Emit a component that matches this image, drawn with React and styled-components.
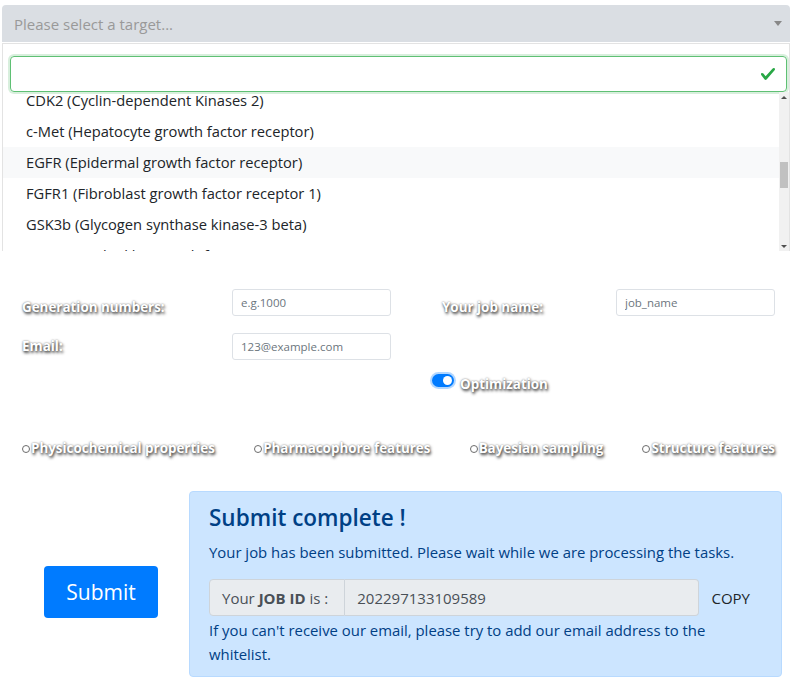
import React from 'react';
import styled, { createGlobalStyle } from 'styled-components';

const FONT = `"Open Sans", "Noto Sans", "Liberation Sans", sans-serif`;

const GlobalStyle = createGlobalStyle`
	body {
		margin: 0;
		background: #fff;
		font-family: ${FONT};
	}
	* {
		box-sizing: border-box;
	}
`;

const targets = [
	'CDK2 (Cyclin-dependent Kinases 2)',
	'c-Met (Hepatocyte growth factor receptor)',
	'EGFR (Epidermal growth factor receptor)',
	'FGFR1 (Fibroblast growth factor receptor 1)',
	'GSK3b (Glycogen synthase kinase-3 beta)',
	'IGF1R (Insulin-like growth factor 1 receptor)',
];

const features = [
	'Physicochemical properties',
	'Pharmacophore features',
	'Bayesian sampling',
	'Structure features',
];

function CheckIcon() {
	return (
		<svg width='16' height='16' viewBox='0 0 8 8'>
			<path
				fill='#28a745'
				d='M2.3 6.73L.6 4.53c-.4-1.04.46-1.4 1.1-.8l1.1 1.4 3.4-3.8c.6-.63 1.6-.27 1.2.7l-4 4.6c-.43.5-.8.4-1.1.1z'
			/>
		</svg>
	);
}

function App() {
	return (
		<Page>
			<GlobalStyle />
			<SelectBox>
				Please select a target...
				<Caret />
			</SelectBox>
			<Dropdown>
				<SearchWrap>
					<SearchInput>
						<CheckIcon />
					</SearchInput>
				</SearchWrap>
				<ListViewport>
					<Options>
						<OptionList>
							{targets.map((t) => (
								<Option key={t} $active={t.startsWith('EGFR')}>
									{t}
								</Option>
							))}
						</OptionList>
					</Options>
					<Scrollbar>
						<ScrollArrow $up />
						<Track>
							<Thumb />
						</Track>
						<ScrollArrow />
					</Scrollbar>
				</ListViewport>
			</Dropdown>

			<Form>
				<FieldGrid>
					<Label $align='end'>Generation numbers:</Label>
					<TextInput placeholder='e.g.1000' />
					<Label $align='end' $indent>
						Your job name:
					</Label>
					<TextInput placeholder='job_name' />
					<Label $align='center'>Email:</Label>
					<TextInput placeholder='123@example.com' />
				</FieldGrid>
				<SwitchRow>
					<Switch />
					<Label $drop>Optimization</Label>
				</SwitchRow>
				<RadioRow>
					{features.map((f) => (
						<RadioItem key={f}>
							<RadioDot />
							<Label>{f}</Label>
						</RadioItem>
					))}
				</RadioRow>
			</Form>

			<Bottom>
				<SubmitCol>
					<SubmitBtn>Submit</SubmitBtn>
				</SubmitCol>
				<Alert>
					<AlertTitle>Submit complete !</AlertTitle>
					<AlertText>
						Your job has been submitted. Please wait while we are processing
						the tasks.
					</AlertText>
					<InputGroup>
						<Prepend>
							Your&nbsp;<b>JOB ID</b>&nbsp;is :
						</Prepend>
						<JobInput readOnly value='202297133109589' />
						<CopyBtn>COPY</CopyBtn>
					</InputGroup>
					<Note>
						If you can't receive our email, please try to add our email address
						to the whitelist.
					</Note>
				</Alert>
			</Bottom>
		</Page>
	);
}

export default App;

const Page = styled.div`
	width: 800px;
	padding-top: 5px;
	color: #212529;
	font-family: ${FONT};
`;

const SelectBox = styled.div`
	margin: 0 10px 0 2px;
	height: 37px;
	background: #dadee3;
	border-radius: 4px 4px 0 0;
	display: flex;
	align-items: center;
	justify-content: space-between;
	padding: 0 8px 0 12px;
	color: #999;
	font-size: 15px;
`;

const Caret = styled.span`
	width: 0;
	height: 0;
	border-left: 4px solid transparent;
	border-right: 4px solid transparent;
	border-top: 5px solid #888;
`;

const Dropdown = styled.div`
	margin: 1px 10px 0 2px;
	border: 1px solid #e3e3e3;
	border-bottom: 0;
	background: #fff;
`;

const SearchWrap = styled.div`
	padding: 12px 2px 0 7px;
`;

const SearchInput = styled.div`
	height: 36px;
	border: 1px solid #5fc074;
	border-radius: 4px;
	box-shadow: 0 0 0 2px rgba(40, 167, 69, 0.18);
	display: flex;
	align-items: center;
	justify-content: flex-end;
	padding-right: 10px;
`;

const ListViewport = styled.div`
	display: flex;
	height: 159px;
`;

const Options = styled.div`
	flex: 1;
	overflow: hidden;
`;

const OptionList = styled.div`
	margin-top: -7px;
`;

const Option = styled.div`
	height: 31px;
	line-height: 31px;
	padding-left: 23px;
	font-size: 14.7px;
	white-space: nowrap;
	background: ${(p) => (p.$active ? '#f8f9fa' : 'transparent')};
`;

const Scrollbar = styled.div`
	width: 10px;
	background: #f1f1f1;
	display: flex;
	flex-direction: column;
`;

const ScrollArrow = styled.div`
	height: 10px;
	display: flex;
	align-items: center;
	justify-content: center;

	&::before {
		content: '';
		border-left: 3px solid transparent;
		border-right: 3px solid transparent;
		${(p) =>
			p.$up ? 'border-bottom: 3px solid #505050;' : 'border-top: 3px solid #505050;'}
	}
`;

const Track = styled.div`
	flex: 1;
	padding-top: 60px;
`;

const Thumb = styled.div`
	height: 26px;
	margin: 0 1px;
	background: #c1c1c1;
`;

const Form = styled.div`
	padding: 38px 25px 0 22px;
`;

const FieldGrid = styled.div`
	display: grid;
	grid-template-columns: 210px 159px 225px 159px;
	grid-auto-rows: 27px;
	row-gap: 17px;
`;

const Label = styled.span`
	align-self: ${(p) => p.$align || 'auto'};
	padding-left: ${(p) => (p.$indent ? '51px' : '0')};
	margin-top: ${(p) => (p.$drop ? '4.5px' : '0')};
	margin-bottom: ${(p) => (p.$align === 'end' ? '-1px' : '0')};
	font-size: 13.4px;
	font-weight: 700;
	color: #fff;
	line-height: 19px;
	white-space: nowrap;
	text-shadow: 1px 2px 3px rgba(0, 0, 0, 0.75), 0 0 2px rgba(0, 0, 0, 0.5);
`;

const TextInput = styled.input`
	height: 27px;
	width: 100%;
	border: 1px solid #dde1e6;
	border-radius: 3px;
	padding: 0 8px;
	font-family: ${FONT};
	font-size: 11.5px;
	color: #495057;
	outline: none;

	&::placeholder {
		color: #6c757d;
	}
`;

const SwitchRow = styled.div`
	display: flex;
	align-items: flex-start;
	gap: 6px;
	margin: 10px 0 0 410px;
`;

const Switch = styled.span`
	position: relative;
	flex: none;
	width: 22px;
	height: 13px;
	margin-top: 4px;
	border-radius: 7px;
	background: #007bff;
	box-shadow: 0 0 0 2px rgba(0, 123, 255, 0.3);

	&::after {
		content: '';
		position: absolute;
		right: 2px;
		top: 2px;
		width: 9px;
		height: 9px;
		border-radius: 50%;
		background: #fff;
	}
`;

const RadioRow = styled.div`
	display: flex;
	justify-content: space-between;
	margin-top: 45.5px;
`;

const RadioItem = styled.div`
	display: flex;
	align-items: center;
	gap: 1px;
`;

const RadioDot = styled.span`
	width: 8px;
	height: 8px;
	border-radius: 50%;
	border: 1px solid #6c6c6c;
	background: #fff;
`;

const Bottom = styled.div`
	display: flex;
	align-items: center;
	margin-top: 33px;
`;

const SubmitCol = styled.div`
	width: 189px;
	padding: 16px 0 0 44px;
`;

const SubmitBtn = styled.button`
	width: 114px;
	height: 52px;
	border: 0;
	border-radius: 4px;
	background: #007bff;
	color: #fff;
	font-family: ${FONT};
	font-size: 21px;
`;

const Alert = styled.div`
	width: 593px;
	padding: 11px 19px 10px;
	background: #cce5ff;
	border: 1px solid #b8daff;
	border-radius: 4px;
	color: #004085;
`;

const AlertTitle = styled.h4`
	margin: 0 0 8px;
	font-size: 22.5px;
	font-weight: 600;
	line-height: 29px;
`;

const AlertText = styled.p`
	margin: 0 0 15px;
	font-size: 14.9px;
	line-height: 24px;
`;

const InputGroup = styled.div`
	display: flex;
	height: 37px;
`;

const Prepend = styled.div`
	display: flex;
	align-items: center;
	padding: 0 16px 0 12px;
	background: #e9ecef;
	border: 1px solid #ced4da;
	border-radius: 4px 0 0 4px;
	color: #495057;
	font-size: 15px;
	white-space: nowrap;
`;

const JobInput = styled.input`
	flex: 1;
	min-width: 0;
	background: #e9ecef;
	border: 1px solid #ced4da;
	border-left: 0;
	border-radius: 0 4px 4px 0;
	padding: 0 12px;
	color: #495057;
	font-family: ${FONT};
	font-size: 15px;
	outline: none;
`;

const CopyBtn = styled.button`
	padding: 0 12px;
	background: transparent;
	border: 0;
	color: #212529;
	font-family: ${FONT};
	font-size: 15px;
`;

const Note = styled.p`
	margin: 2px 0 0;
	font-size: 14.9px;
	line-height: 24px;
`;
